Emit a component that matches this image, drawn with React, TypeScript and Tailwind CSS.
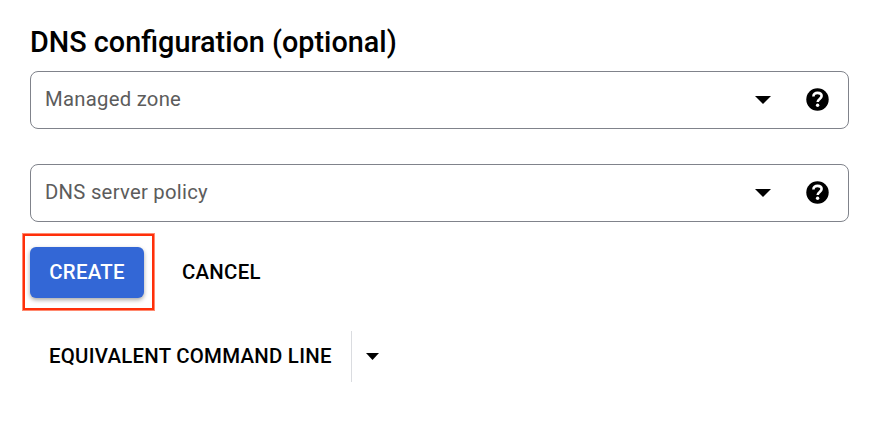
function Help() {
  return (
    <svg className="relative -top-px" width="23" height="23" viewBox="0 0 23 23">
      <circle cx="11.5" cy="11.5" r="11.2" fill="#000" />
      <path d="M7.4 8.5C7.4 6.2 9.2 4.9 11.5 4.9c2.4 0 4.1 1.2 4.1 3.2 0 2.9-3.9 2.9-3.9 5.9" fill="none" stroke="#fff" strokeWidth="2.6" />
      <circle cx="11.6" cy="17.3" r="1.7" fill="#fff" />
    </svg>
  );
}

function Field({ label }: { label: string }) {
  return (
    <div className="flex h-[58px] w-[819px] items-center rounded-[8px] border border-[#80838b] pr-[19px] pl-[14px]">
      <span className="flex-1 pb-[2px] text-[20.3px] leading-6 tracking-[0.26px] text-[#5c5c5c]">{label}</span>
      <svg className="mr-[35px]" width="16" height="8" viewBox="0 0 16 8">
        <path d="M0 0h16L8 8z" />
      </svg>
      <Help />
    </div>
  );
}

export default function App() {
  return (
    <main className="h-[432px] w-[888px] overflow-hidden bg-white pt-[24px] pl-[30px] font-['Roboto',sans-serif] text-black">
      <h1 className="h-[47px] text-[28.8px] leading-9 font-medium">DNS configuration (optional)</h1>
      <Field label="Managed zone" />
      <div className="h-[35px]" />
      <Field label="DNS server policy" />
      <div className="-ml-[7px] mt-[11px] flex h-[78px] items-center">
        <div className="flex h-[76px] w-[131px] items-center border-2 border-[#ff2f0a] pl-[5px] ring-1 ring-[#ff8a70]">
          <button className="h-[51px] w-[114px] rounded-[6px] bg-[#3367d6] text-[20.4px] font-medium tracking-[0.26px] text-white shadow-[0_2px_4px_rgba(0,0,0,0.35)]">CREATE</button>
        </div>
        <button className="ml-[28px] text-[20.4px] font-medium tracking-[0.26px]">CANCEL</button>
      </div>
      <div className="mt-[20px] flex h-[51px] items-center">
        <button className="w-[321px] pb-px pl-[19px] text-left text-[20.4px] font-medium tracking-[0.26px]">EQUIVALENT COMMAND LINE</button>
        <div className="h-full w-px bg-[#dadce0]" />
        <svg className="ml-[14px]" width="13" height="7" viewBox="0 0 13 7"><path d="M0 0h13L6.5 7z" /></svg>
      </div>
    </main>
  );
}
